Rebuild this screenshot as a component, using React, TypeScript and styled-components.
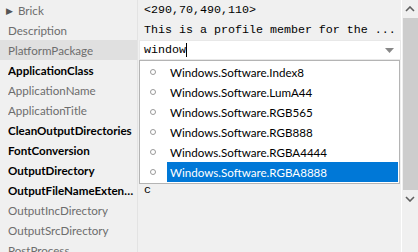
import React from "react";
import styled, { createGlobalStyle } from "styled-components";

const GlobalStyle = createGlobalStyle`
  html, body {
    margin: 0;
    padding: 0;
    background: #f0f0f0;
    overflow: hidden;
  }
`;

type Prop = { name: string; value?: string; bold?: boolean; expander?: boolean; selected?: boolean; combo?: boolean };

const props: Prop[] = [
  { name: "Brick", value: "<290,70,490,110>", expander: true },
  { name: "Description", value: "This is a profile member for the ..." },
  { name: "PlatformPackage", selected: true, combo: true },
  { name: "ApplicationClass", bold: true },
  { name: "ApplicationName" },
  { name: "ApplicationTitle" },
  { name: "CleanOutputDirectories", bold: true },
  { name: "FontConversion", bold: true },
  { name: "OutputDirectory", bold: true },
  { name: "OutputFileNameExtension", value: "c", bold: true },
  { name: "OutputIncDirectory" },
  { name: "OutputSrcDirectory" },
  { name: "PostProcess" },
];

const options = [
  "Windows.Software.Index8",
  "Windows.Software.LumA44",
  "Windows.Software.RGB565",
  "Windows.Software.RGB888",
  "Windows.Software.RGBA4444",
  "Windows.Software.RGBA8888",
];

export default function App() {
  return (
    <Frame>
      <GlobalStyle />
      <Grid>
        {props.map((p) => (
          <Row key={p.name}>
            <NameCell $selected={p.selected} $bold={p.bold}>
              {p.expander && <Expander>▶</Expander>}
              <NameText>{p.name}</NameText>
            </NameCell>
            <ValueCell>
              {p.combo ? (
                <ComboWrap>
                  <ComboBox>
                    <ComboText>
                      window<Caret />
                    </ComboText>
                    <ComboArrow viewBox="0 0 9 5">
                      <path d="M0 0h9L4.5 5z" fill="#888" />
                    </ComboArrow>
                  </ComboBox>
                  <Popup>
                    {options.map((o, i) => (
                      <Option key={o}>
                        <Bullet />
                        <OptionText $active={i === options.length - 1}>{o}</OptionText>
                      </Option>
                    ))}
                  </Popup>
                </ComboWrap>
              ) : (
                <ValueText>{p.value}</ValueText>
              )}
            </ValueCell>
          </Row>
        ))}
      </Grid>
      <ScrollBar>
        <Chevron viewBox="0 0 10 6">
          <path d="M1 5l4-4 4 4" stroke="#606060" strokeWidth="1.6" fill="none" />
        </Chevron>
        <Thumb />
        <Chevron viewBox="0 0 10 6">
          <path d="M1 1l4 4 4-4" stroke="#606060" strokeWidth="1.6" fill="none" />
        </Chevron>
      </ScrollBar>
    </Frame>
  );
}

const Frame = styled.div`
  width: 418px;
  height: 252px;
  display: flex;
  overflow: hidden;
  background: #f0f0f0;
`;

const Grid = styled.div`
  flex: 1;
  display: flex;
  flex-direction: column;
  border-right: 1px solid #ffffff;
`;

const Row = styled.div`
  display: grid;
  grid-template-columns: 138px 1fr;
  height: 20px;
  flex-shrink: 0;
`;

const NameCell = styled.div<{ $selected?: boolean; $bold?: boolean }>`
  display: flex;
  align-items: center;
  padding: 1px 2px 0 8px;
  background: ${(p) => (p.$selected ? "#e0e0e0" : "transparent")};
  border-right: 1px solid #e3e3e3;
  font-family: Lato, "Liberation Sans", sans-serif;
  font-size: 11.6px;
  font-weight: ${(p) => (p.$bold ? 700 : 400)};
  color: ${(p) => (p.$bold ? "#000000" : "#6d6d6d")};
  min-width: 0;
  overflow: hidden;
`;

const Expander = styled.span`
  font-size: 9px;
  color: #555;
  margin-left: -2px;
  margin-right: 5px;
`;

const NameText = styled.span`
  white-space: nowrap;
  overflow: hidden;
  text-overflow: ellipsis;
`;

const ValueCell = styled.div`
  position: relative;
  display: flex;
  align-items: center;
  padding-left: 6px;
  min-width: 0;
`;

const ValueText = styled.span`
  font-family: "Liberation Mono", monospace;
  font-size: 11.67px;
  color: #000;
  white-space: nowrap;
`;

const ComboWrap = styled.div`
  position: absolute;
  inset: 0 0 0 1px;
`;

const ComboBox = styled.div`
  height: 20px;
  box-sizing: border-box;
  background: #fff;
  border: 1px solid #e8e8e8;
  display: flex;
  align-items: center;
  padding-left: 4px;
  padding-right: 6px;
`;

const ComboText = styled.span`
  flex: 1;
  font-family: "Liberation Mono", monospace;
  font-size: 11.67px;
  color: #000;
  display: flex;
  align-items: center;
`;

const Caret = styled.span`
  display: inline-block;
  width: 1px;
  height: 14px;
  background: #000;
`;

const ComboArrow = styled.svg`
  width: 9px;
  height: 5px;
`;

const Popup = styled.div`
  position: absolute;
  top: 20px;
  left: 0;
  width: 261px;
  box-sizing: border-box;
  background: #fff;
  border: 1px solid #b4b4b4;
  padding: 1px;
  z-index: 2;
`;

const Option = styled.div`
  display: flex;
  align-items: center;
  height: 20px;
`;

const Bullet = styled.span`
  width: 4px;
  height: 4px;
  border: 1.5px solid #999;
  border-radius: 50%;
  margin-left: 9px;
  margin-right: 11px;
`;

const OptionText = styled.span<{ $active?: boolean }>`
  flex: 1;
  height: 100%;
  display: flex;
  align-items: center;
  padding-left: 3px;
  padding-top: 1px;
  box-sizing: border-box;
  background: ${(p) => (p.$active ? "#0078d7" : "transparent")};
  color: ${(p) => (p.$active ? "#ffffff" : "#000000")};
  font-family: Lato, "Liberation Sans", sans-serif;
  font-size: 11.6px;
`;

const ScrollBar = styled.div`
  width: 16px;
  display: flex;
  flex-direction: column;
  align-items: center;
  background: #f0f0f0;
`;

const Chevron = styled.svg`
  width: 10px;
  height: 6px;
  margin: 6px 0;
  flex-shrink: 0;
`;

const Thumb = styled.div`
  width: 15px;
  height: 172px;
  background: #cdcdcd;
  flex-shrink: 0;
`;
